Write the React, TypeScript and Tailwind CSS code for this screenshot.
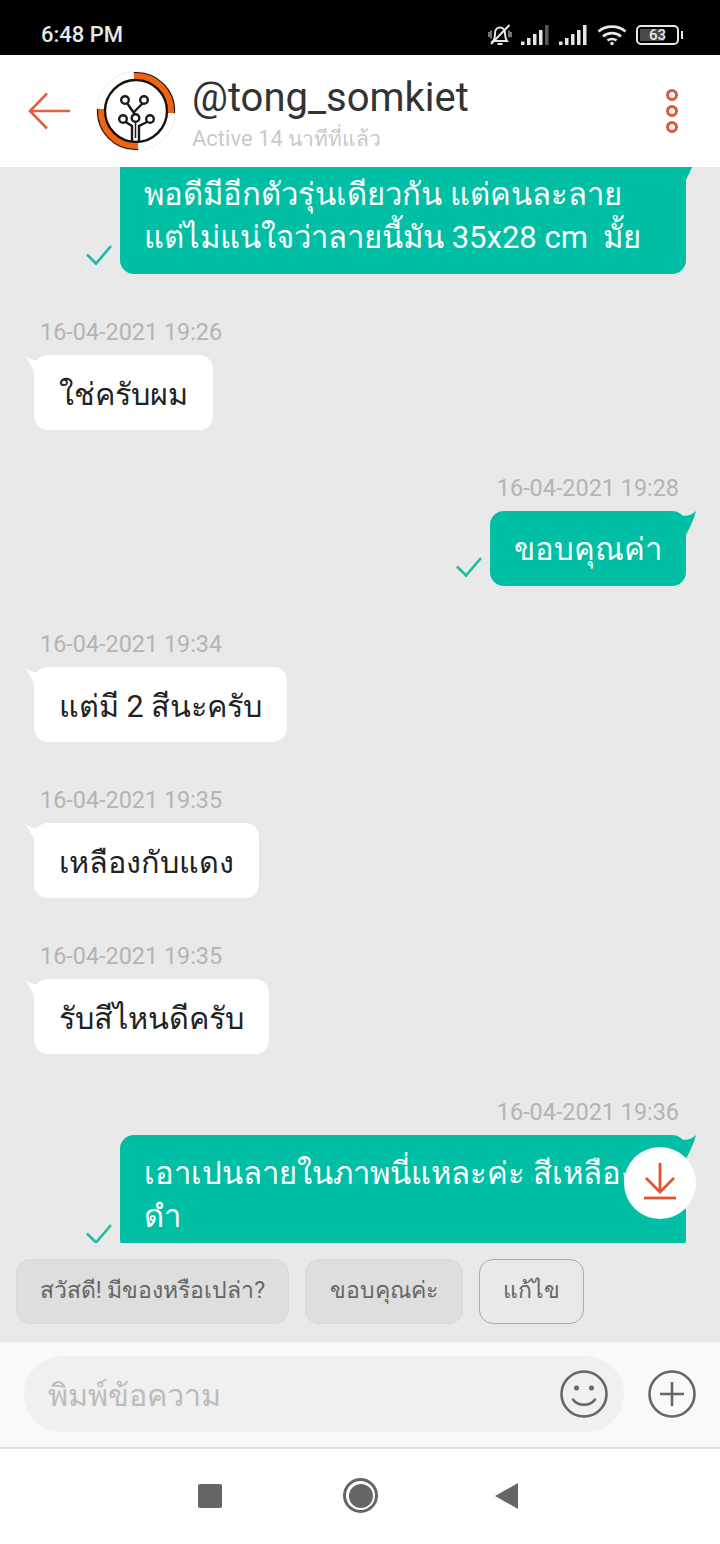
function BubbleTail({ side, color }: { side: "left" | "right"; color: string }) {
  if (side === "left") {
    return (
      <svg viewBox="0 0 24 24" className="absolute left-[-10px] top-0 w-6 h-6" fill={color}>
        <path d="M0 0 C4 4 8 5 14 5 L12 24 C10 14 6 7 0 0Z" />
      </svg>
    );
  }
  return (
    <svg viewBox="0 0 26 26" className="absolute right-[-10px] top-0 w-[26px] h-[26px]" fill={color}>
      <path d="M26 0 C22 4 16 6 10 4 L2 0 L0 14 L16 24 C20 16 24 8 26 0Z" />
    </svg>
  );
}

function CheckMark() {
  return (
    <svg viewBox="0 0 26 22" className="w-[26px] h-[22px] mb-2 shrink-0" fill="none" stroke="#19bd9f" strokeWidth="2.6">
      <path d="M1 10.5 L10 19.5 L25 2" />
    </svg>
  );
}

function Stamp({ time, right }: { time: string; right?: boolean }) {
  return (
    <div className={`h-6 mb-3 text-[23.4px] leading-[26px] text-[#b4b4b4] ${right ? "text-right pr-[41px]" : "pl-10"}`}>
      {time}
    </div>
  );
}

function Incoming({ time, text }: { time: string; text: string }) {
  return (
    <div className="mb-[45px]">
      <Stamp time={time} />
      <div className="pl-[34px] flex">
        <div className="relative bg-white rounded-[14px] px-[25px] pt-[18px] pb-[14px] text-[30.6px] leading-[43px] text-[#222]">
          <BubbleTail side="left" color="#ffffff" />
          {text}
        </div>
      </div>
    </div>
  );
}

function Outgoing({ time, lines, wide }: { time?: string; lines: string[]; wide?: boolean }) {
  return (
    <div className="mb-[45px]">
      {time && <Stamp time={time} right />}
      <div className="pr-[34px] flex justify-end items-end gap-2">
        <CheckMark />
        <div className={`relative bg-[#00bfa5] rounded-[14px] px-6 pt-[17px] pb-[15px] text-[31px] leading-[43px] text-white ${wide ? "w-[566px]" : ""}`}>
          <BubbleTail side="right" color="#00bfa5" />
          {lines.map((l) => (
            <div key={l} className="whitespace-pre">{l}</div>
          ))}
        </div>
      </div>
    </div>
  );
}

function BellOff() {
  return (
    <svg viewBox="0 0 24 22" className="w-6 h-[22px]" fill="none" stroke="#e6e6e6" strokeWidth="2">
      <path d="M5 17c2-2 2-4.500 2-7.500C7 6 9 3.500 12 3.500s5 2.500 5 6c0 3 .500 5.500 2 7.500z" />
      <path d="M9.500 20h5" />
      <path d="M21.500 1 3 20" />
      <path d="M1 8v5M3 6.500v8M23 8v5M21 6.500v7" strokeWidth="1.500" stroke="#9a9a9a" />
    </svg>
  );
}

function Signal({ dim }: { dim?: boolean }) {
  return (
    <svg viewBox="0 0 29 20" className="w-[29px] h-5" fill="#e6e6e6">
      <rect x="0" y="16.500" width="3.500" height="3.500" />
      <rect x="6" y="13" width="3.500" height="7" />
      <rect x="12" y="9" width="3.500" height="11" />
      <rect x="18" y="5" width="3.500" height="15" />
      <rect x="24" y="0" width="3.500" height="20" fill={dim ? "#5a5a5a" : "#e6e6e6"} />
    </svg>
  );
}

function Wifi() {
  return (
    <svg viewBox="0 0 30 22" className="w-[30px] h-[22px]" fill="none" stroke="#e6e6e6" strokeWidth="2.600">
      <path d="M1.500 7.500C8.500 1 21.500 1 28.500 7.500" />
      <path d="M6 12.500c5-4.500 13-4.500 18 0" />
      <path d="M10.500 16.500c2.500-2 6.500-2 9 0" />
      <circle cx="15" cy="19.500" r="1.800" fill="#e6e6e6" stroke="none" />
    </svg>
  );
}

function Battery() {
  return (
    <div className="flex items-center gap-[2px]">
      <div className="relative w-[43px] h-[20px] rounded-[5px] border-2 border-[#e6e6e6] flex items-center justify-center overflow-hidden">
        <div className="absolute left-[2px] top-[2px] bottom-[2px] w-[24px] bg-[#4a4a4a]" />
        <span className="relative text-[15px] leading-4 font-medium text-[#e6e6e6]">63</span>
      </div>
      <div className="w-[2px] h-2 bg-[#e6e6e6]" />
    </div>
  );
}

function Avatar() {
  return (
    <svg viewBox="0 0 90 90" className="w-[90px] h-[90px] shrink-0 -ml-[6px] -mr-[6px]" fill="none">
      <circle cx="45" cy="45" r="39.500" fill="#ffffff" stroke="#eeeeee" />
      <circle cx="45" cy="45" r="31" stroke="#1a1008" strokeWidth="2.400" />
      <path d="M43 10 A35 35 0 0 1 80 47" stroke="#1a1008" strokeWidth="8" />
      <path d="M43 10 A35 35 0 0 1 80 47" stroke="#ee6414" strokeWidth="6" />
      <path d="M47 80 A35 35 0 0 1 10 43" stroke="#1a1008" strokeWidth="8" />
      <path d="M47 80 A35 35 0 0 1 10 43" stroke="#ee6414" strokeWidth="6" />
      <g stroke="#1a1a1a" strokeWidth="2.400">
        <path d="M41 75V60L33 55" />
        <path d="M48 75V60L58 55" />
        <path d="M44.500 72V54" strokeWidth="1.500" />
        <path d="M45 50 36 37" />
        <path d="M43 46 52 37" />
        <circle cx="34" cy="34" r="3.800" fill="#ffffff" />
        <circle cx="53" cy="34" r="3.800" fill="#ffffff" />
        <circle cx="32" cy="53" r="3.800" fill="#ffffff" />
        <circle cx="44.500" cy="52" r="3.800" fill="#ffffff" />
        <circle cx="59" cy="53" r="3.800" fill="#ffffff" />
      </g>
    </svg>
  );
}

export default function App() {
  return (
    <div className="w-[720px] h-[1544px] flex flex-col overflow-hidden bg-white font-['Roboto','Noto_Sans',sans-serif]">
      {/* status bar */}
      <div className="h-[55px] bg-black flex items-center pl-[41px] pr-[37px] pt-[14px] shrink-0">
        <span className="text-[22px] leading-6 font-medium text-[#e8e8e8]">6:48 PM</span>
        <div className="ml-auto flex items-center gap-[9px]">
          <BellOff />
          <Signal dim />
          <Signal />
          <Wifi />
          <Battery />
        </div>
      </div>

      {/* header */}
      <div className="relative z-10 h-28 bg-white flex items-center pl-7 pr-[42px] shrink-0">
        <svg viewBox="0 0 42 38" className="w-[42px] h-[38px] mr-[27px]" fill="none" stroke="#e0603f" strokeWidth="2.600">
          <path d="M19 1.500 2 19l17 17.500" />
          <path d="M2 19h40" />
        </svg>
        <Avatar />
        <div className="ml-[17px] flex flex-col pt-1">
          <div className="text-[40px] leading-[50px] text-[#333]">@tong_somkiet</div>
          <div className="text-[22px] leading-7 text-[#c9c9c9] mt-[2px]">
            Active 14 <span className="text-[21px]">นาทีที่แล้ว</span>
          </div>
        </div>
        <div className="ml-auto flex flex-col gap-1">
          <div className="w-3 h-3 rounded-full border-[3px] border-[#d9593a]" />
          <div className="w-3 h-3 rounded-full border-[3px] border-[#d9593a]" />
          <div className="w-3 h-3 rounded-full border-[3px] border-[#d9593a]" />
        </div>
      </div>

      {/* messages */}
      <div className="relative h-[1076px] bg-[#e9e9e9] overflow-hidden shrink-0">
        <div className="-mt-[11px]">
          <Outgoing wide lines={["พอดีมีอีกตัวรุ่นเดียวกัน แต่คนละลาย", "แต่ไม่แน่ใจว่าลายนี้มัน 35x28 cm  มั้ย"]} />
          <Incoming time="16-04-2021 19:26" text="ใช่ครับผม" />
          <Outgoing time="16-04-2021 19:28" lines={["ขอบคุณค่า"]} />
          <Incoming time="16-04-2021 19:34" text="แต่มี 2 สีนะครับ" />
          <Incoming time="16-04-2021 19:35" text="เหลืองกับแดง" />
          <Incoming time="16-04-2021 19:35" text="รับสีไหนดีครับ" />
          <Outgoing wide time="16-04-2021 19:36" lines={["เอาเปนลายในภาพนี่แหละค่ะ สีเหลือง-", "ดำ"]} />
        </div>
        <div className="absolute left-[624px] top-[980px] w-[72px] h-[72px] rounded-full bg-white flex items-center justify-center">
          <svg viewBox="0 0 34 38" className="w-[34px] h-[38px] mb-1" fill="none" stroke="#e5502e" strokeWidth="2.800">
            <path d="M17 1v29" />
            <path d="M3 16l14 14 14-14" />
            <path d="M1 36h32" />
          </svg>
        </div>
      </div>

      {/* quick replies */}
      <div className="h-[98px] bg-[#e9e9e9] flex items-start gap-4 pl-4 pt-4 shrink-0">
        <div className="h-[65px] w-[273px] rounded-[14px] bg-[#dedede] border border-[#d9d9d9] flex items-center justify-center text-[23px] text-[#666]">
          สวัสดี! มีของหรือเปล่า?
        </div>
        <div className="h-[65px] w-[158px] rounded-[14px] bg-[#dedede] border border-[#d9d9d9] flex items-center justify-center text-[23px] text-[#666]">
          ขอบคุณค่ะ
        </div>
        <div className="h-[65px] w-[105px] rounded-[14px] border border-[#ababab] flex items-center justify-center text-[23px] text-[#666]">
          แก้ไข
        </div>
      </div>

      {/* input */}
      <div className="h-[108px] bg-[#f9f9f9] border-t border-[#e4e4e4] border-b-2 border-b-[#e0e0e0] flex items-start pt-[14px] pl-6 pr-6 shrink-0">
        <div className="h-[76px] w-[600px] rounded-full bg-[#f0f0f0] flex items-center pl-6 pr-4">
          <span className="text-[30.6px] text-[#bcbcbc] pt-1">พิมพ์ข้อความ</span>
          <svg viewBox="0 0 48 48" className="ml-auto w-12 h-12" fill="none" stroke="#666" strokeWidth="2.600">
            <circle cx="24" cy="24" r="22.500" />
            <path d="M13 29.500c5 7 17 7 22 0" strokeLinecap="round" />
            <circle cx="16.500" cy="18" r="2.500" fill="#666" stroke="none" />
            <circle cx="31.500" cy="18" r="2.500" fill="#666" stroke="none" />
          </svg>
        </div>
        <svg viewBox="0 0 48 48" className="ml-auto mt-[14px] w-12 h-12" fill="none" stroke="#666" strokeWidth="2.600">
          <circle cx="24" cy="24" r="22.500" />
          <path d="M24 12v24M12 24h24" />
        </svg>
      </div>

      {/* nav bar */}
      <div className="flex-1 bg-white flex items-center pl-[198px] pb-[2px]">
        <div className="w-6 h-6 rounded-[2px] bg-[#666]" />
        <div className="ml-[121px] w-[35px] h-[35px] rounded-full border-[3px] border-[#666] flex items-center justify-center">
          <div className="w-6 h-6 rounded-full bg-[#666]" />
        </div>
        <svg viewBox="0 0 23 26" className="ml-[117px] w-[23px] h-[26px]" fill="#666">
          <path d="M0 13 23 0v26z" />
        </svg>
      </div>
    </div>
  );
}
